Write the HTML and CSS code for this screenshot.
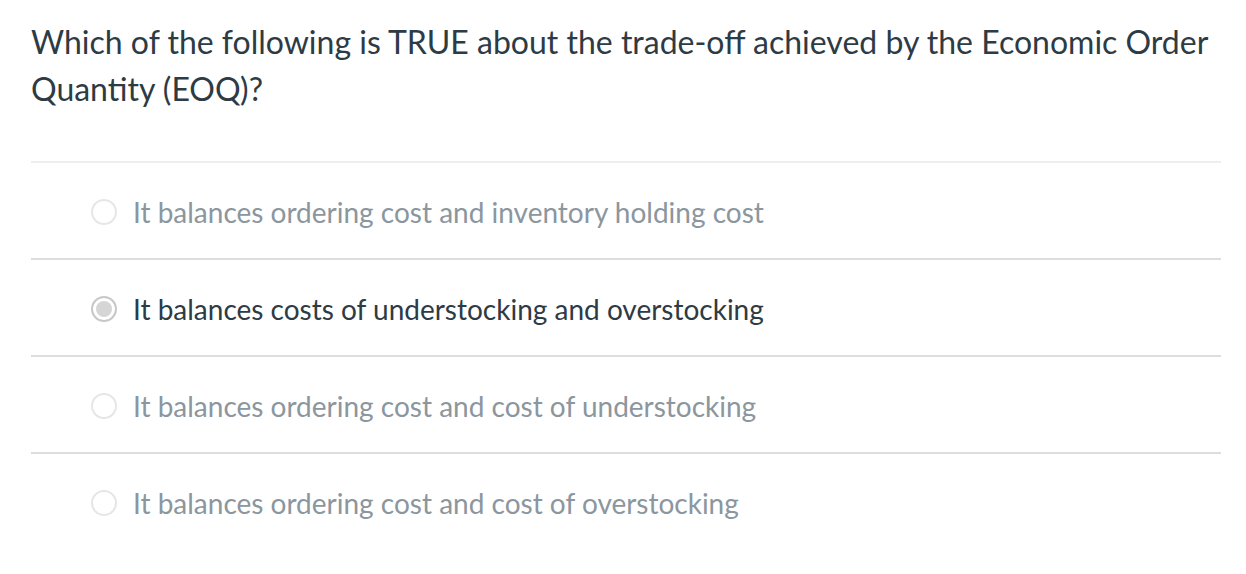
FILE: index.html
```html
<!DOCTYPE html>
<html>
<head>
<meta charset="utf-8">
<link rel="stylesheet" href="styles.css">
</head>
<body>
<div class="question">
  <div class="prompt">Which of the following is TRUE about the trade-off achieved by the Economic Order Quantity (EOQ)?</div>
  <div class="answers">
    <div class="answer">
      <span class="radio"></span>
      <span class="label">It balances ordering cost and inventory holding cost</span>
    </div>
    <div class="answer selected">
      <span class="radio"></span>
      <span class="label">It balances costs of understocking and overstocking</span>
    </div>
    <div class="answer">
      <span class="radio"></span>
      <span class="label">It balances ordering cost and cost of understocking</span>
    </div>
    <div class="answer">
      <span class="radio"></span>
      <span class="label">It balances ordering cost and cost of overstocking</span>
    </div>
  </div>
</div>
</body>
</html>
```
FILE: styles.css
```css
html, body {
  margin: 0;
  padding: 0;
  background: #ffffff;
}
body {
  font-family: Lato, "Open Sans", sans-serif;
  color: #2d3b45;
}
.question {
  padding: 18px 25px 0 31px;
}
.prompt {
  font-size: 32px;
  line-height: 47px;
}
.answers {
  margin-top: 49px;
  border-top: 2px solid #eeeeee;
}
.answer {
  display: flex;
  align-items: center;
  gap: 16px;
  height: 93px;
  padding-top: 2px;
  padding-left: 60px;
  border-bottom: 2px solid #dddddd;
}
.answer:last-child {
  border-bottom: none;
}
.radio {
  width: 22px;
  height: 22px;
  border: 2px solid #e6e6e6;
  border-radius: 50%;
  box-sizing: content-box;
  background: #fff;
  flex: none;
}
.selected .radio {
  border-color: #c8c8c8;
  background: #d5d5d5;
  box-shadow: inset 0 0 0 3px #ffffff;
}
.label {
  font-size: 28px;
  color: #8b969e;
}
.selected .label {
  color: #2d3b45;
}
```
